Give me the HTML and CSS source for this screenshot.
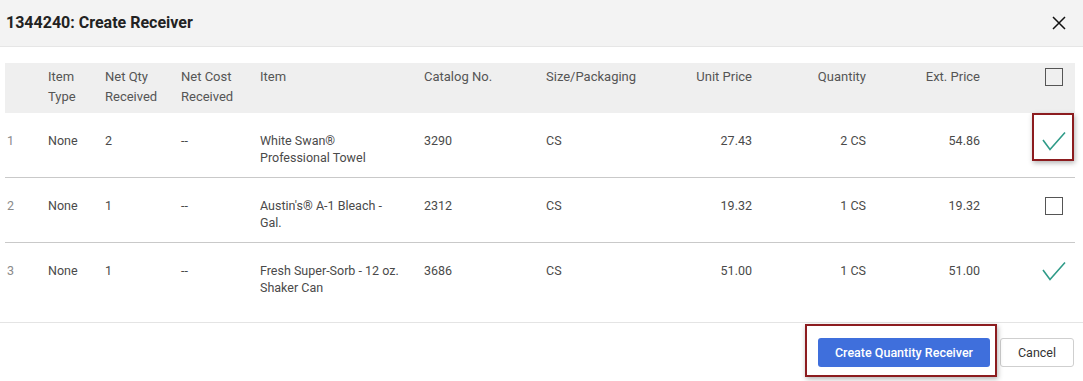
FILE: index.html
```html
<!DOCTYPE html>
<html lang="en">
<head>
    <meta charset="UTF-8">
    <meta name="viewport" content="width=device-width, initial-scale=1.0">
    <title>1344240: Create Receiver</title>
    <link rel="stylesheet" href="styles.css">
</head>
<body>

    <div class="modal">
        <div class="modal-header">
            <h2>1344240: Create Receiver</h2>
            <button class="close" type="button" aria-label="Close">
                <svg width="14" height="14" viewBox="0 0 14 14"><path d="M1 1 L13 13 M13 1 L1 13" stroke="#111" stroke-width="1.5" fill="none"/></svg>
            </button>
        </div>

        <div class="modal-body">
            <table class="items">
                <colgroup>
                    <col style="width:43px">
                    <col style="width:57px">
                    <col style="width:76px">
                    <col style="width:79px">
                    <col style="width:164px">
                    <col style="width:122px">
                    <col style="width:120px">
                    <col style="width:86px">
                    <col style="width:114px">
                    <col style="width:114px">
                    <col style="width:95px">
                </colgroup>
                <thead>
                    <tr>
                        <th></th>
                        <th>Item<br>Type</th>
                        <th>Net Qty<br>Received</th>
                        <th>Net Cost<br>Received</th>
                        <th>Item</th>
                        <th>Catalog No.</th>
                        <th>Size/Packaging</th>
                        <th class="num">Unit Price</th>
                        <th class="num">Quantity</th>
                        <th class="num">Ext. Price</th>
                        <th class="sel"><span class="mark"><span class="box"></span></span></th>
                    </tr>
                </thead>
                <tbody>
                    <tr>
                        <td class="idx">1</td>
                        <td>None</td>
                        <td>2</td>
                        <td>--</td>
                        <td><span class="name">White Swan® Professional Towel</span></td>
                        <td>3290</td>
                        <td>CS</td>
                        <td class="num">27.43</td>
                        <td class="num">2 CS</td>
                        <td class="num">54.86</td>
                        <td class="sel">
                            <span class="mark"><svg width="24" height="20" viewBox="0 0 24 20"><path d="M1 9 L8 18.5 L23 1.5" stroke="#2f9b88" stroke-width="1.6" fill="none"/></svg></span>
                            <span class="callout callout-check"></span>
                        </td>
                    </tr>
                    <tr>
                        <td class="idx">2</td>
                        <td>None</td>
                        <td>1</td>
                        <td>--</td>
                        <td><span class="name">Austin's® A-1 Bleach - Gal.</span></td>
                        <td>2312</td>
                        <td>CS</td>
                        <td class="num">19.32</td>
                        <td class="num">1 CS</td>
                        <td class="num">19.32</td>
                        <td class="sel"><span class="mark"><span class="box"></span></span></td>
                    </tr>
                    <tr>
                        <td class="idx">3</td>
                        <td>None</td>
                        <td>1</td>
                        <td>--</td>
                        <td><span class="name">Fresh Super-Sorb - 12 oz. Shaker Can</span></td>
                        <td>3686</td>
                        <td>CS</td>
                        <td class="num">51.00</td>
                        <td class="num">1 CS</td>
                        <td class="num">51.00</td>
                        <td class="sel"><span class="mark"><svg width="24" height="20" viewBox="0 0 24 20"><path d="M1 9 L8 18.5 L23 1.5" stroke="#2f9b88" stroke-width="1.6" fill="none"/></svg></span></td>
                    </tr>
                </tbody>
            </table>
        </div>

        <div class="modal-footer">
            <div class="primary-wrap">
                <button class="btn btn-primary" type="button">Create Quantity Receiver</button>
                <span class="callout callout-button"></span>
            </div>
            <button class="btn btn-default" type="button">Cancel</button>
        </div>
    </div>

</body>
</html>
```

FILE: styles.css
```css
body {
    margin: 0;
    padding: 0;
    font-family: Roboto, "Liberation Sans", Arial, sans-serif;
    background-color: #fff;
    color: #444;
}

.modal {
    width: 1083px;
    background-color: #fff;
}

.modal-header {
    height: 46px;
    display: flex;
    align-items: center;
    justify-content: space-between;
    padding: 0 17px 0 6px;
    background-color: #f3f3f3;
    border-bottom: 1px solid #e6e6e6;
}

.modal-header h2 {
    margin: 0;
    font-size: 16px;
    font-weight: 700;
    color: #222;
    margin-top: -2px;
}

.close {
    background: none;
    border: none;
    padding: 0;
    width: 14px;
    height: 14px;
    cursor: pointer;
    display: flex;
}

.modal-body {
    padding: 16px 8px 15px 5px;
}

.items {
    width: 1070px;
    table-layout: fixed;
    border-collapse: collapse;
}

.items th {
    background-color: #efefef;
    font-size: 13px;
    font-weight: 400;
    color: #555;
    text-align: left;
    vertical-align: top;
    line-height: 20px;
    padding: 4px 0 6px 0;
    height: 40px;
}

.items td {
    font-size: 12.5px;
    color: #4a4a4a;
    vertical-align: top;
    line-height: 17px;
    padding: 19px 0 11px 0;
    height: 34px;
    border-bottom: 1px solid #c9c9c9;
}

.items tbody tr:last-child td {
    border-bottom: none;
}

.items td.idx {
    color: #8a8a8a;
    padding-left: 2px;
}

.items .num {
    text-align: right;
}

.items .sel {
    text-align: right;
    padding-right: 9px;
    position: relative;
}

.name {
    display: block;
    width: 142px;
}

.mark {
    display: inline-flex;
    width: 24px;
    height: 17px;
    align-items: center;
    justify-content: center;
    vertical-align: top;
    overflow: visible;
}

.items th .mark {
    height: 20px;
}

.box {
    flex: none;
    width: 16px;
    height: 16px;
    border: 1px solid #555;
    background-color: #fff;
}

.items th .box {
    background-color: transparent;
}

.mark svg {
    flex: none;
}

.callout {
    position: absolute;
    border: 2px solid #8c1c1f;
    box-shadow: 1px 2px 5px rgba(0, 0, 0, 0.3);
    pointer-events: none;
}

.callout-check {
    left: 52px;
    top: 0;
    width: 38px;
    height: 44px;
}

.modal-footer {
    display: flex;
    justify-content: flex-end;
    gap: 10px;
    padding: 15px 9px 14px 0;
    border-top: 1px solid #e4e4e4;
}

.primary-wrap {
    position: relative;
    display: flex;
}

.callout-button {
    left: -13px;
    right: -7px;
    top: -14px;
    bottom: -10px;
}

.btn {
    height: 29px;
    font-family: inherit;
    font-size: 12.5px;
    border-radius: 3px;
    cursor: pointer;
}

.btn-primary {
    width: 172px;
    background-color: #3f6fdc;
    color: #fff;
    border: none;
    font-weight: 500;
}

.btn-default {
    width: 74px;
    background-color: #fff;
    color: #333;
    border: 1px solid #cfcfcf;
}
```
